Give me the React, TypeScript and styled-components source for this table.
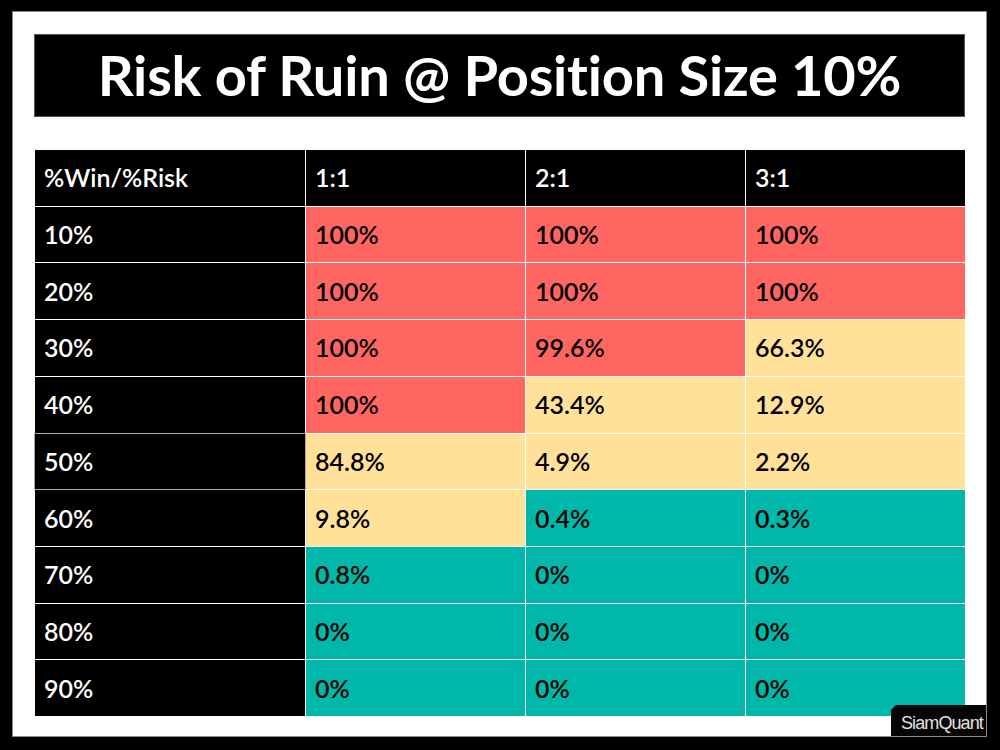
import React from "react";
import styled, { createGlobalStyle } from "styled-components";

const Global = createGlobalStyle`
  html, body { margin: 0; padding: 0; background: #000; }
  body { width: 1000px; height: 750px; overflow: hidden; }
  * { box-sizing: border-box; }
`;

const Page = styled.div`
  width: 1000px;
  height: 750px;
  background: #000;
  padding: 11px 13px 13px 12px;
`;

const Frame = styled.div`
  position: relative;
  width: 975px;
  height: 726px;
  background: #fff;
  border: 1px solid #8a8a8a;
  padding: 22px 21px 0 21px;
  display: flex;
  flex-direction: column;
  overflow: hidden;
`;

const TitleBar = styled.div`
  height: 83px;
  background: #000;
  border: 1px solid #555;
  display: flex;
  align-items: center;
  justify-content: center;
  color: #fff;
  font-family: Lato, "Liberation Sans", sans-serif;
  font-weight: 700;
  font-size: 56px;
  letter-spacing: -0.2px;
  margin-bottom: 33px;
  padding-bottom: 2px;
`;

const Table = styled.div`
  display: grid;
  grid-template-columns: 270px 219px 219px 219px;
  grid-template-rows: repeat(10, 1fr);
  gap: 1px;
  height: 566px;
  width: 931px;
  margin-left: 1px;
`;

type Tone = "head" | "red" | "yellow" | "teal";

const bg: Record<Tone, string> = {
  head: "#000",
  red: "#ff6661",
  yellow: "#ffe199",
  teal: "#00b8aa",
};

const Cell = styled.div<{ $tone: Tone; $mark?: boolean }>`
  background: ${(p) => bg[p.$tone]};
  color: ${(p) => (p.$tone === "head" ? "#fff" : "#000")};
  font-family: "Lato Semibold", "Lato SemiBold", Lato, "Liberation Sans", sans-serif;
  font-weight: 600;
  font-size: 25px;
  display: flex;
  align-items: center;
  padding: 0 0 1px 9px;
  outline: ${(p) => (p.$mark ? "1px solid #a8a8a8" : "none")};
`;

const Badge = styled.div`
  position: absolute;
  right: -1px;
  bottom: -1px;
  width: 96px;
  height: 32px;
  background: #050505;
  clip-path: polygon(5px 0, 100% 0, 100% 100%, 0 100%, 0 5px);
  color: #e2e2e2;
  font-family: "Liberation Sans", Arial, sans-serif;
  font-size: 18px;
  letter-spacing: -0.9px;
  padding: 8px 0 0 10px;
  white-space: nowrap;
`;

const cols = ["1:1", "2:1", "3:1"];
const rows: [string, [string, Tone][]][] = [
  ["10%", [["100%", "red"], ["100%", "red"], ["100%", "red"]]],
  ["20%", [["100%", "red"], ["100%", "red"], ["100%", "red"]]],
  ["30%", [["100%", "red"], ["99.6%", "red"], ["66.3%", "yellow"]]],
  ["40%", [["100%", "red"], ["43.4%", "yellow"], ["12.9%", "yellow"]]],
  ["50%", [["84.8%", "yellow"], ["4.9%", "yellow"], ["2.2%", "yellow"]]],
  ["60%", [["9.8%", "yellow"], ["0.4%", "teal"], ["0.3%", "teal"]]],
  ["70%", [["0.8%", "teal"], ["0%", "teal"], ["0%", "teal"]]],
  ["80%", [["0%", "teal"], ["0%", "teal"], ["0%", "teal"]]],
  ["90%", [["0%", "teal"], ["0%", "teal"], ["0%", "teal"]]],
];

export default function App() {
  return (
    <>
      <Global />
      <Page>
        <Frame>
          <TitleBar>Risk of Ruin @ Position Size 10%</TitleBar>
          <Table>
            <Cell $tone="head">%Win/%Risk</Cell>
            {cols.map((c) => (
              <Cell key={c} $tone="head">
                {c}
              </Cell>
            ))}
            {rows.map(([label, vals]) => (
              <React.Fragment key={label}>
                <Cell $tone="head" $mark={label === "50%"}>
                  {label}
                </Cell>
                {vals.map(([v, t], i) => (
                  <Cell key={i} $tone={t}>
                    {v}
                  </Cell>
                ))}
              </React.Fragment>
            ))}
          </Table>
          <Badge>SiamQuant</Badge>
        </Frame>
      </Page>
    </>
  );
}
